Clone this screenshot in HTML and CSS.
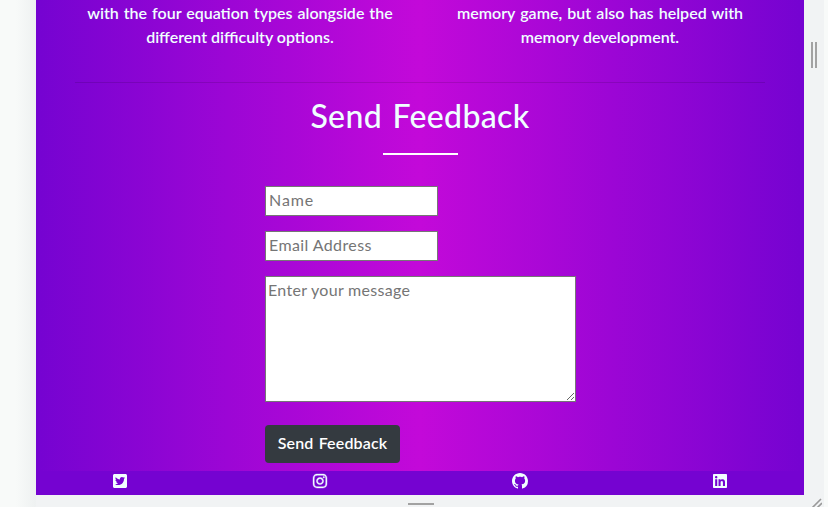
FILE: index.html
```html
<!DOCTYPE html>
<html lang="en">
<head>
<meta charset="utf-8">
<title>Send Feedback</title>
<link rel="stylesheet" href="styles.css">
</head>
<body>
<div class="workspace">
  <div class="device">
    <div class="page">
      <main class="content">
        <section class="about">
          <p><span class="l1">with the four equation types alongside the</span><br><span class="l2">different difficulty options.</span></p>
          <p><span class="l3">memory game, but also has helped with</span><br><span class="l4">memory development.</span></p>
        </section>
        <hr class="rule">
        <h2><span>Send Feedback</span></h2>
        <div class="underline"></div>
        <form class="feedback">
          <input class="name" type="text" placeholder="Name">
          <input class="email" type="text" placeholder="Email Address">
          <textarea placeholder="Enter your message"></textarea>
          <button type="button"><span>Send Feedback</span></button>
        </form>
      </main>
      <footer class="social">
        <svg viewBox="0 0 448 512"><path d="M400 32H48C21.500 32 0 53.500 0 80v352c0 26.500 21.500 48 48 48h352c26.500 0 48-21.500 48-48V80c0-26.500-21.500-48-48-48zm-48.900 158.800c.2 2.800.2 5.700.2 8.500 0 86.700-66 186.600-186.600 186.600-37.200 0-71.700-10.800-100.700-29.400 5.300.6 10.400.8 15.800.8 30.700 0 58.900-10.400 81.400-28-28.800-.6-53-19.500-61.300-45.500 10.100 1.500 19.200 1.500 29.600-1.200-30-6.100-52.500-32.500-52.500-64.400v-.8c8.700 4.900 18.900 7.900 29.600 8.300a65.447 65.447 0 0 1-29.200-54.600c0-12.200 3.200-23.400 8.900-33.100 32.300 39.800 80.800 65.800 135.200 68.600-9.300-44.500 24-80.600 64-80.600 18.900 0 35.900 7.900 47.900 20.700 14.800-2.800 29-8.300 41.600-15.800-4.900 15.200-15.200 28-28.800 36.100 13.200-1.400 26-5.100 37.800-10.200-8.900 13.100-20.100 24.700-32.900 34z"/></svg>
        <svg class="instagram" viewBox="0 0 448 512"><path d="M224.100 141c-63.600 0-114.900 51.300-114.900 114.900s51.300 114.900 114.900 114.900S339 319.500 339 255.900 287.700 141 224.100 141zm0 189.600c-41.100 0-74.700-33.500-74.700-74.700s33.500-74.700 74.700-74.700 74.700 33.500 74.700 74.700-33.600 74.700-74.700 74.700zm146.400-194.300c0 14.900-12 26.800-26.800 26.800-14.900 0-26.800-12-26.800-26.800s12-26.800 26.800-26.800 26.800 12 26.800 26.800zm76.100 27.200c-1.700-35.900-9.900-67.700-36.200-93.900-26.200-26.200-58-34.400-93.900-36.200-37-2.100-147.900-2.100-184.900 0-35.800 1.700-67.600 9.900-93.900 36.100s-34.400 58-36.200 93.900c-2.100 37-2.100 147.900 0 184.900 1.700 35.900 9.900 67.700 36.200 93.900s58 34.400 93.900 36.200c37 2.100 147.900 2.100 184.900 0 35.900-1.700 67.700-9.900 93.900-36.200 26.200-26.200 34.400-58 36.200-93.900 2.100-37 2.100-147.800 0-184.800zM398.800 388c-7.800 19.600-22.900 34.700-42.600 42.600-29.500 11.700-99.500 9-132.100 9s-102.700 2.600-132.100-9c-19.600-7.800-34.700-22.900-42.600-42.600-11.700-29.500-9-99.500-9-132.100s-2.600-102.700 9-132.100c7.800-19.600 22.900-34.700 42.600-42.600 29.500-11.700 99.500-9 132.100-9s102.700-2.600 132.100 9c19.600 7.800 34.700 22.900 42.600 42.600 11.700 29.500 9 99.500 9 132.100s2.700 102.700-9 132.100z"/></svg>
        <svg viewBox="0 0 16 16"><path d="M8 0C3.580 0 0 3.580 0 8c0 3.540 2.290 6.530 5.470 7.590.4.070.55-.17.55-.38 0-.19-.01-.82-.01-1.490-2.010.37-2.530-.49-2.690-.94-.09-.23-.48-.94-.82-1.130-.28-.15-.68-.52-.01-.53.63-.01 1.080.58 1.230.82.72 1.210 1.870.87 2.330.66.07-.52.28-.87.51-1.070-1.780-.2-3.640-.89-3.640-3.950 0-.87.31-1.590.82-2.150-.08-.2-.36-1.020.08-2.120 0 0 .67-.21 2.200.82.64-.18 1.320-.27 2-.27s1.360.09 2 .27c1.530-1.040 2.200-.82 2.200-.82.44 1.100.16 1.920.08 2.120.51.56.82 1.270.82 2.150 0 3.070-1.870 3.750-3.650 3.950.29.25.54.73.54 1.480 0 1.070-.01 1.930-.01 2.200 0 .21.15.46.55.38A8.013 8.013 0 0 0 16 8c0-4.420-3.580-8-8-8z"/></svg>
        <svg viewBox="0 0 448 512"><path d="M416 32H31.900C14.300 32 0 46.500 0 64.300v383.400C0 465.500 14.300 480 31.900 480H416c17.600 0 32-14.500 32-32.300V64.300c0-17.800-14.400-32.300-32-32.300zM135.400 416H69V202.200h66.500V416zm-33.200-243c-21.300 0-38.500-17.300-38.500-38.500S80.900 96 102.200 96c21.200 0 38.500 17.300 38.500 38.500 0 21.300-17.200 38.500-38.500 38.500zm282.100 243h-66.400V312c0-24.800-.5-56.700-34.500-56.700-34.600 0-39.900 27-39.900 54.900V416h-66.400V202.200h63.700v29.200h.9c8.900-16.800 30.600-34.500 62.900-34.500 67.200 0 79.700 44.300 79.700 101.900V416z"/></svg>
      </footer>
    </div>
    <div class="handle-right"><i></i><i></i></div>
    <div class="handle-bottom"><i></i></div>
    <svg class="corner" viewBox="0 0 12 9"><path d="M1 11 11 1M6 11 12 5"/></svg>
  </div>
</div>
</body>
</html>
```
FILE: styles.css
```css
* { box-sizing: border-box; }
body {
  margin: 0;
  height: 507px;
  overflow: hidden;
  background: #f8faf9;
  font: 500 16px/24px Lato, sans-serif;
  color: azure;
}
.workspace {
  height: 507px;
  padding: 0 4px 0 36px;
  background: linear-gradient(90deg, #f8faf9 16px, #eef1f1 36px, #f8faf9 36px);
}
.device {
  display: grid;
  grid-template-columns: 768px 20px;
  grid-template-rows: 495px 12px;
  background: #f1f3f4;
}
.page { display: flex; flex-direction: column; }
.content {
  height: 471px;
  padding: 1px 24px 0;
  background: linear-gradient(90deg, #7503d1, #c309d9 50%, #7503d1);
}
.about { display: flex; font-weight: 600; text-align: center; white-space: nowrap; }
.about p { width: 360px; margin: 0; }
.l1 { word-spacing: 1px; }
.l3 { word-spacing: 1.2px; }
.rule { height: 1px; margin: 33px 15px 0; border: 0; background: rgba(0, 0, 0, .12); }
h2 {
  height: 70px;
  margin: 0;
  padding-top: 14px;
  font-size: 32px;
  line-height: 38px;
  font-weight: 500;
  text-align: center;
  white-space: nowrap;
  letter-spacing: .35px;
  word-spacing: 2px;
}
.underline { width: 75px; height: 2px; margin: 0 auto; background: #fff; }
.feedback { display: flex; flex-direction: column; align-items: flex-start; padding: 31px 0 0 205px; }
input, textarea {
  border: 1px solid #767676;
  border-radius: 0;
  padding: 0 2px 4px 3px;
  background: #fff;
  font: 400 16px/24px Lato, sans-serif;
}
input { width: 173px; height: 30px; margin-bottom: 15px; }
.name { letter-spacing: .9px; }
.email { letter-spacing: .4px; }
textarea { width: 311px; height: 126px; padding: 1px 2px; overflow: hidden; letter-spacing: .3px; }
::placeholder { color: #757575; }
button {
  width: 135px;
  height: 38px;
  margin-top: 23px;
  padding: 0 0 2px;
  border: 0;
  border-radius: 4px;
  background: #343a40;
  color: #fff;
  font: 600 16px/24px Lato, sans-serif;
  white-space: nowrap;
  letter-spacing: .15px;
  word-spacing: 1px;
}
.social {
  display: flex;
  justify-content: space-between;
  height: 24px;
  padding: 2px 76px 0;
  background: #7503d1;
}
.social svg { width: 16px; height: 16px; fill: azure; }
.social .instagram { stroke: azure; stroke-width: 12; }
.handle-right { display: flex; justify-content: center; gap: 2px; padding-top: 42px; }
.handle-right i { width: 2px; height: 26px; background: #a2a2a2; }
.handle-bottom { display: flex; justify-content: center; padding: 8px 0 0 2px; }
.handle-bottom i { width: 26px; height: 2px; background: #a2a2a2; }
.corner { width: 12px; height: 9px; margin: 3px 0 0 6px; fill: none; stroke: #999; stroke-width: 1.6; }
```
